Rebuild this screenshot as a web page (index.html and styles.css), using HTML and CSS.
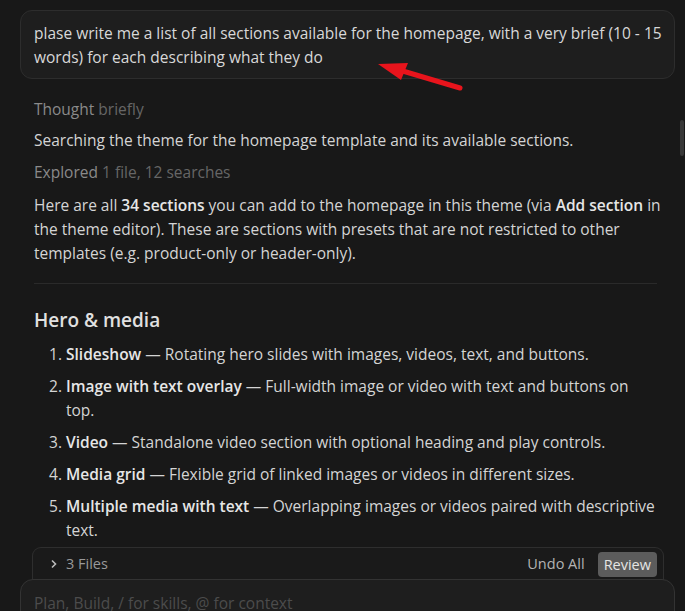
FILE: index.html
```html
<!DOCTYPE html>
<html lang="en">
<head>
    <meta charset="UTF-8">
    <meta name="viewport" content="width=device-width, initial-scale=1.0">
    <title>chat</title>
    <link rel="stylesheet" href="styles.css">
</head>
<body>
    <div class="thread">
        <div class="user-msg">
            plase write me a list of all sections available for the homepage, with a very brief (10 - 15 words) for each describing what they do
        </div>

        <svg class="arrow" width="100" height="40" viewBox="0 0 100 40">
            <line x1="26" y1="14" x2="90" y2="33" stroke="#e8141c" stroke-width="5" stroke-linecap="round"/>
            <polygon points="8,9 38,8 31,25" fill="#e8141c"/>
        </svg>

        <div class="reply">
            <div class="meta">Thought <span>briefly</span></div>
            <p>Searching the theme for the homepage template and its available sections.</p>
            <div class="meta">Explored <span>1 file, 12 searches</span></div>
            <p class="intro">Here are all <b>34 sections</b> you can add to the homepage in this theme (via <b>Add section</b> in the theme editor). These are sections with presets that are not restricted to other templates (e.g. product-only or header-only).</p>
            <hr>
            <h2>Hero &amp; media</h2>
            <ol>
                <li><b>Slideshow</b> — Rotating hero slides with images, videos, text, and buttons.</li>
                <li><b>Image with text overlay</b> — Full-width image or video with text and buttons on top.</li>
                <li><b>Video</b> — Standalone video section with optional heading and play controls.</li>
                <li><b>Media grid</b> — Flexible grid of linked images or videos in different sizes.</li>
                <li><b>Multiple media with text</b> — Overlapping images or videos paired with descriptive text.</li>
            </ol>
        </div>

        <div class="scroll-thumb"></div>
    </div>

    <div class="files-bar">
        <div class="files-left">
            <svg width="10" height="10" viewBox="0 0 10 10"><path d="M3 1.5 L6.5 5 L3 8.5" fill="none" stroke="#bbb" stroke-width="1.6"/></svg>
            <span>3 Files</span>
        </div>
        <div class="files-right">
            <span class="undo">Undo All</span>
            <button type="button" class="review">Review</button>
        </div>
    </div>

    <div class="composer">Plan, Build, / for skills, @ for context</div>
</body>
</html>
```
FILE: styles.css
```css
*{
    margin: 0;
    padding: 0;
    box-sizing: border-box;
}
html, body{
    height: 611px;
    overflow: hidden;
}
body{
    background-color: #181818;
    color: #d4d4d4;
    font-family: "Open Sans", "Noto Sans", sans-serif;
    font-size: 15.5px;
    line-height: 24px;
}
.thread{
    height: 547px;
    overflow: hidden;
    position: relative;
    padding: 10px 10px 0 20px;
}
.user-msg{
    background-color: #1e1e1e;
    border: 1px solid #2d2d2d;
    border-radius: 12px;
    padding: 10px 6px 9px 13px;
    color: #d8d8d8;
}
.arrow{
    position: absolute;
    left: 370px;
    top: 55px;
}
.reply{
    padding: 0 6px 0 14px;
}
.meta{
    margin-top: 18px;
    color: #8a8a8a;
}
.meta span{
    color: #666;
}
.reply p{
    margin-top: 7px;
}
.meta + p + .meta{
    margin-top: 8px;
}
.reply p.intro{
    margin-top: 9px;
}
.reply p + hr{
    margin-top: 18px;
}
b{
    font-weight: 600;
    color: #e6e6e6;
}
hr{
    border: none;
    border-top: 1px solid #2a2a2a;
    margin-right: 12px;
}
h2{
    font-size: 19px;
    line-height: 28px;
    font-weight: 600;
    color: #e0e0e0;
    margin-top: 22px;
}
ol{
    padding-left: 32px;
    padding-right: 12px;
    margin-top: 8px;
}
li{
    margin-bottom: 8px;
}
.scroll-thumb{
    position: absolute;
    right: 1px;
    top: 120px;
    width: 4px;
    height: 36px;
    background-color: #383838;
    border-radius: 2px;
}
.files-bar{
    display: flex;
    justify-content: space-between;
    align-items: center;
    height: 33px;
    margin: 0 21px 0 32px;
    padding: 0 6px 0 16px;
    border: 1px solid #2e2e2e;
    border-bottom: none;
    border-radius: 9px 9px 0 0;
    background-color: #1a1a1a;
}
.files-left{
    display: flex;
    align-items: center;
    gap: 7px;
    color: #999;
    font-size: 14.5px;
}
.files-right{
    display: flex;
    align-items: center;
    gap: 13px;
}
.undo{
    color: #b3b3b3;
    font-size: 14.5px;
}
.review{
    height: 25px;
    padding: 0 6px;
    border: none;
    border-radius: 4px;
    background-color: #5c5c5c;
    color: #e4e4e4;
    font-family: inherit;
    font-size: 14.5px;
}
.composer{
    margin: -1px 10px 0 20px;
    height: 60px;
    border: 1px solid #333;
    border-radius: 13px;
    background-color: #1e1e1e;
    padding: 11px 13px;
    color: #4c4c4c;
}
```
